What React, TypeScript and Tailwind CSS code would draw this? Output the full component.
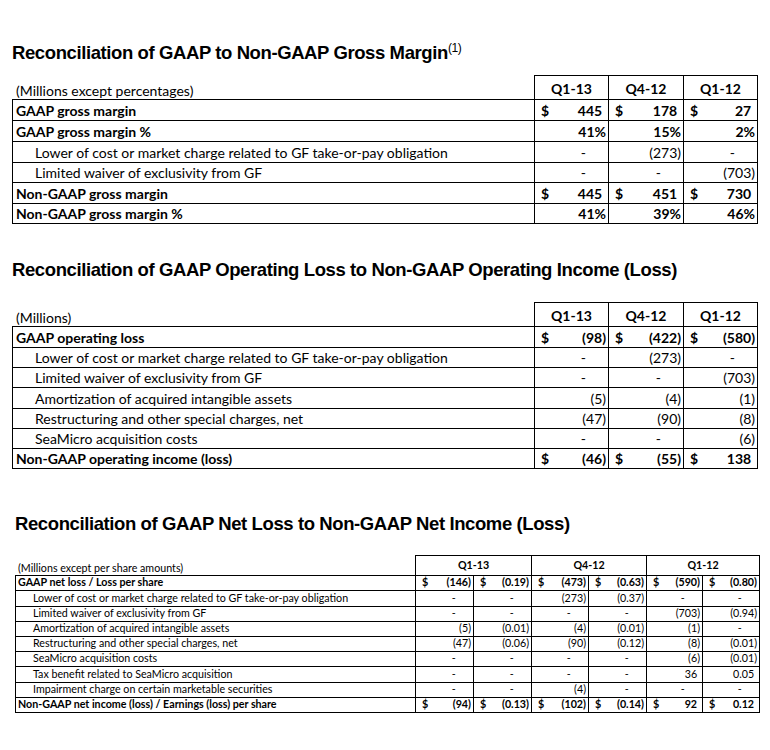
import React from 'react';

type Cell = string;
type Row = { label: string; bold?: boolean; vals: Cell[]; h: string };

const body = "font-['Lato',sans-serif]";
const title = "font-['Liberation_Sans',Arial,sans-serif] font-bold text-[18.5px] leading-[19px] tracking-[-0.4px] text-black";

// accounting style number: "$" on the left, value on the right,
// with the width of ")" kept free when the value has no parenthesis
const Num: React.FC<{ v: string; dollar?: boolean }> = ({ v, dollar }) => {
  const isDash = v === '-';
  const isPct = v.endsWith('%');
  return (
    <div className="flex h-full w-full items-end justify-between pb-[2px]">
      <span className="pl-[6px]">{dollar ? '$' : ''}</span>
      <span className="pr-[2px]">
        {v}
        {isDash && <span className="invisible">00)</span>}
        {!isDash && !isPct && !v.endsWith(')') && <span className="invisible">)</span>}
      </span>
    </div>
  );
};

const parse = (c: string) => (c.startsWith('$') ? { v: c.slice(1), dollar: true } : { v: c, dollar: false });

const gross: Row[] = [
  { label: 'GAAP gross margin', bold: true, vals: ['$445', '$178', '$27'], h: 'h-[21px]' },
  { label: 'GAAP gross margin %', bold: true, vals: ['41%', '15%', '2%'], h: 'h-[21px]' },
  { label: 'Lower of cost or market charge related to GF take-or-pay obligation', vals: ['-', '(273)', '-'], h: 'h-[21px]' },
  { label: 'Limited waiver of exclusivity from GF', vals: ['-', '-', '(703)'], h: 'h-[20px]' },
  { label: 'Non-GAAP gross margin', bold: true, vals: ['$445', '$451', '$730'], h: 'h-[21px]' },
  { label: 'Non-GAAP gross margin %', bold: true, vals: ['41%', '39%', '46%'], h: 'h-[20px]' },
];

const operating: Row[] = [
  { label: 'GAAP operating loss', bold: true, vals: ['$(98)', '$(422)', '$(580)'], h: 'h-[21px]' },
  { label: 'Lower of cost or market charge related to GF take-or-pay obligation', vals: ['-', '(273)', '-'], h: 'h-[20px]' },
  { label: 'Limited waiver of exclusivity from GF', vals: ['-', '-', '(703)'], h: 'h-[20px]' },
  { label: 'Amortization of acquired intangible assets', vals: ['(5)', '(4)', '(1)'], h: 'h-[21px]' },
  { label: 'Restructuring and other special charges, net', vals: ['(47)', '(90)', '(8)'], h: 'h-[20px]' },
  { label: 'SeaMicro acquisition costs', vals: ['-', '-', '(6)'], h: 'h-[20px]' },
  { label: 'Non-GAAP operating income (loss)', bold: true, vals: ['$(46)', '$(55)', '$138'], h: 'h-[20px]' },
];

const netLoss: Row[] = [
  { label: 'GAAP net loss / Loss per share', bold: true, vals: ['$(146)', '$(0.19)', '$(473)', '$(0.63)', '$(590)', '$(0.80)'], h: 'h-[15px]' },
  { label: 'Lower of cost or market charge related to GF take-or-pay obligation', vals: ['-', '-', '(273)', '(0.37)', '-', '-'], h: 'h-[16px]' },
  { label: 'Limited waiver of exclusivity from GF', vals: ['-', '-', '-', '-', '(703)', '(0.94)'], h: 'h-[15px]' },
  { label: 'Amortization of acquired intangible assets', vals: ['(5)', '(0.01)', '(4)', '(0.01)', '(1)', '-'], h: 'h-[15px]' },
  { label: 'Restructuring and other special charges, net', vals: ['(47)', '(0.06)', '(90)', '(0.12)', '(8)', '(0.01)'], h: 'h-[15px]' },
  { label: 'SeaMicro acquisition costs', vals: ['-', '-', '-', '-', '(6)', '(0.01)'], h: 'h-[15px]' },
  { label: 'Tax benefit related to SeaMicro acquisition', vals: ['-', '-', '-', '-', '36', '0.05'], h: 'h-[16px]' },
  { label: 'Impairment charge on certain marketable securities', vals: ['-', '-', '(4)', '-', '-', '-'], h: 'h-[15px]' },
  { label: 'Non-GAAP net income (loss) / Earnings (loss) per share', bold: true, vals: ['$(94)', '$(0.13)', '$(102)', '$(0.14)', '$92', '$0.12'], h: 'h-[15px]' },
];

const QuarterTable: React.FC<{ caption: string; rows: Row[] }> = ({ caption, rows }) => (
  <div className={`grid w-[746px] grid-cols-[523px_74px_75px_74px] text-[14px] text-black ${body}`}>
    {/* header */}
    <div className="flex h-[25px] items-end border-r border-b border-black pb-[1px] pl-[4px] leading-none">{caption}</div>
    {['Q1-13', 'Q4-12', 'Q1-12'].map((q) => (
      <div key={q} className="flex h-[25px] items-end justify-center border-t border-r border-b border-black pb-[3px] font-bold leading-none">
        {q}
      </div>
    ))}
    {rows.map((r) => (
      <React.Fragment key={r.label}>
        <div className={`flex items-end border-r border-b border-l border-black pb-[2px] leading-none ${r.h} ${r.bold ? 'pl-[3px] font-bold' : 'pl-[22px]'}`}>
          {r.label}
        </div>
        {r.vals.map((c, i) => {
          const p = parse(c);
          return (
            <div key={i} className={`border-r border-b border-black leading-none ${r.h} ${r.bold ? 'font-bold' : ''}`}>
              <Num v={p.v} dollar={p.dollar} />
            </div>
          );
        })}
      </React.Fragment>
    ))}
  </div>
);

const NetTable: React.FC = () => (
  <div className={`grid w-[745px] grid-cols-[401px_58px_58px_57px_58px_56px_57px] text-[10.7px] text-black ${body}`}>
    <div className="flex h-[21px] items-end border-r border-b border-black pb-[1px] pl-[3px] leading-none">
      (Millions except per share amounts)
    </div>
    {['Q1-13', 'Q4-12', 'Q1-12'].map((q) => (
      <div key={q} className="col-span-2 flex h-[21px] items-end justify-center border-t border-r border-b border-black pb-[4px] font-bold leading-none">
        {q}
      </div>
    ))}
    {netLoss.map((r) => (
      <React.Fragment key={r.label}>
        <div className={`flex items-end border-r border-b border-l border-black pb-[2px] leading-none ${r.h} ${r.bold ? 'pl-[2px] font-bold' : 'pl-[17px]'}`}>
          {r.label}
        </div>
        {r.vals.map((c, i) => {
          const p = parse(c);
          return (
            <div key={i} className={`border-r border-b border-black leading-none ${r.h} ${r.bold ? 'font-bold' : ''}`}>
              <Num v={p.v} dollar={p.dollar} />
            </div>
          );
        })}
      </React.Fragment>
    ))}
  </div>
);

export default function App() {
  return (
    <div className="h-[750px] w-[770px] overflow-hidden bg-white">
      <div className="pl-[12px] pt-[43px]">
        <h1 className={title}>
          Reconciliation of GAAP to Non-GAAP Gross Margin
          <sup className="relative top-[0px] align-super text-[12px] font-normal">(1)</sup>
        </h1>
      </div>
      <div className="mt-[13px] pl-[12px]">
        <QuarterTable caption="(Millions except percentages)" rows={gross} />
      </div>

      <div className="pl-[12px] pt-[36px]">
        <h2 className={title}>Reconciliation of GAAP Operating Loss to Non-GAAP Operating Income (Loss)</h2>
      </div>
      <div className="mt-[23px] pl-[12px]">
        <QuarterTable caption="(Millions)" rows={operating} />
      </div>

      <div className="pl-[15px] pt-[45px]">
        <h2 className={title}>Reconciliation of GAAP Net Loss to Non-GAAP Net Income (Loss)</h2>
      </div>
      <div className="mt-[22px] pl-[15px]">
        <NetTable />
      </div>
    </div>
  );
}
